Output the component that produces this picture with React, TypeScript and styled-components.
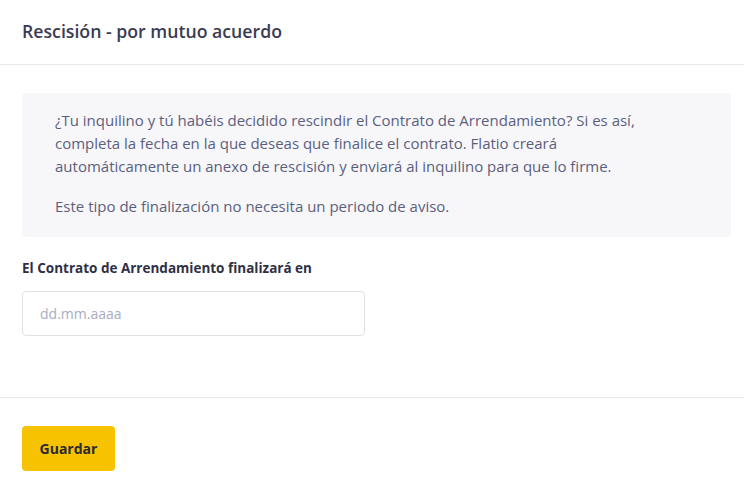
import React from 'react'
import styled, { createGlobalStyle } from 'styled-components'

const GlobalStyle = createGlobalStyle`
  html, body {
    margin: 0;
    padding: 0;
    background: #ffffff;
    font-family: 'Open Sans', 'Noto Sans', sans-serif;
  }
`

const Page = styled.div`
  width: 744px;
  display: flex;
  flex-direction: column;
`

const Header = styled.header`
  height: 65px;
  padding: 0 22px;
  display: flex;
  align-items: center;
  border-bottom: 1px solid #e8e9ef;
  box-sizing: border-box;
`

const Title = styled.h2`
  margin: 0 0 2px;
  font-size: 17.7px;
  font-weight: 600;
  color: #3a3c52;
`

const Body = styled.section`
  padding: 28px 13px 61px 22px;
  display: flex;
  flex-direction: column;
`

const InfoBox = styled.div`
  background: #f7f7fa;
  border-radius: 4px;
  padding: 16px 33px 19px;
  color: #5b5f7e;
  font-size: 15px;
  line-height: 23px;
`

const InfoText = styled.p`
  margin: 0;
  max-width: 600px;
  & + & {
    margin-top: 17px;
  }
`

const Field = styled.div`
  margin-top: 21px;
  display: flex;
  flex-direction: column;
  gap: 13px;
`

const Label = styled.label`
  font-size: 13.5px;
  font-weight: 700;
  color: #2f3045;
  line-height: 20px;
`

const DateInput = styled.input`
  width: 343px;
  height: 45px;
  box-sizing: border-box;
  border: 1px solid #e1e2e8;
  border-radius: 4px;
  padding: 0 17px;
  font-family: inherit;
  font-size: 14px;
  color: #3a3c52;
  outline: none;
  &::placeholder {
    color: #a9adc3;
  }
`

const Footer = styled.footer`
  border-top: 1px solid #e8e9ef;
  padding: 28px 22px;
`

const SaveButton = styled.button`
  height: 45px;
  width: 93px;
  padding: 0;
  border: 0;
  border-radius: 4px;
  background: #f7c200;
  color: #2a2a38;
  font-family: inherit;
  font-size: 14px;
  font-weight: 700;
  cursor: pointer;
`

const App: React.FC = () => {
  const [date, setDate] = React.useState('')
  const handleOnDateChange = (evt: React.ChangeEvent<HTMLInputElement>): void =>
    setDate(evt.target.value)

  return (
    <Page>
      <GlobalStyle />
      <Header>
        <Title>Rescisión - por mutuo acuerdo</Title>
      </Header>
      <Body>
        <InfoBox>
          <InfoText>
            ¿Tu inquilino y tú habéis decidido rescindir el Contrato de
            Arrendamiento? Si es así, completa la fecha en la que deseas que
            finalice el contrato. Flatio creará automáticamente un anexo de
            rescisión y enviará al inquilino para que lo firme.
          </InfoText>
          <InfoText>Este tipo de finalización no necesita un periodo de aviso.</InfoText>
        </InfoBox>
        <Field>
          <Label htmlFor='end-date'>El Contrato de Arrendamiento finalizará en</Label>
          <DateInput
            id='end-date'
            type='text'
            placeholder='dd.mm.aaaa'
            value={date}
            onChange={handleOnDateChange}
          />
        </Field>
      </Body>
      <Footer>
        <SaveButton type='button'>Guardar</SaveButton>
      </Footer>
    </Page>
  )
}

export default App
